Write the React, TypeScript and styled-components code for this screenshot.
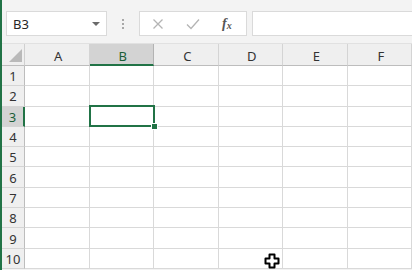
import React from 'react';
import styled, { createGlobalStyle } from 'styled-components';

const GlobalStyle = createGlobalStyle`
  html, body {
    margin: 0;
    padding: 0;
    background: #ffffff;
    overflow: hidden;
  }
  body {
    font-family: "Segoe UI", "Noto Sans", "Open Sans", sans-serif;
  }
`;

const columns = ['A', 'B', 'C', 'D', 'E', 'F'];
const rows = [1, 2, 3, 4, 5, 6, 7, 8, 9, 10];
const selCol = 'B';
const selRow = 3;

function App() {
    return (
        <Window>
            <GlobalStyle />
            <EdgeBar />
            <Main>
                <Toolbar>
                    <NameBox>
                        <span>B3</span>
                        <DropArrow />
                    </NameBox>
                    <Grip>
                        <i /><i /><i />
                    </Grip>
                    <FormulaButtons>
                        <ToolIcon>
                            <svg width="12" height="12" viewBox="0 0 12 12">
                                <path d="M1.5 1.5 L10.5 10.5 M10.5 1.5 L1.5 10.5" stroke="#b4b4b4" strokeWidth="1.3" fill="none" />
                            </svg>
                        </ToolIcon>
                        <ToolIcon>
                            <svg width="14" height="12" viewBox="0 0 14 12">
                                <path d="M1 6.5 L5 10.5 L13 1.5" stroke="#b4b4b4" strokeWidth="1.3" fill="none" />
                            </svg>
                        </ToolIcon>
                        <Fx>f<sub>x</sub></Fx>
                    </FormulaButtons>
                    <FormulaInput />
                </Toolbar>
                <Sheet>
                    <Corner>
                        <svg width="13" height="13" viewBox="0 0 13 13">
                            <path d="M13 0 L13 13 L0 13 Z" fill="#b9b9b9" />
                        </svg>
                    </Corner>
                    {columns.map(c => (
                        <ColHeader key={c} $active={c === selCol}>{c}</ColHeader>
                    ))}
                    {rows.map(r => (
                        <React.Fragment key={r}>
                            <RowHeader $active={r === selRow}>{r}</RowHeader>
                            {columns.map(c => (
                                <Cell key={c}>
                                    {c === selCol && r === selRow && (
                                        <Selection>
                                            <FillHandle />
                                        </Selection>
                                    )}
                                </Cell>
                            ))}
                        </React.Fragment>
                    ))}
                </Sheet>
                <Pointer>
                    <svg width="16" height="16" viewBox="0 0 16 16">
                        <path d="M5.5 1.5 H10.5 V5.5 H14.5 V10.5 H10.5 V14.5 H5.5 V10.5 H1.5 V5.5 H5.5 Z"
                              fill="#ffffff" stroke="#000000" strokeWidth="2" strokeLinejoin="round" />
                    </svg>
                </Pointer>
            </Main>
        </Window>
    );
}

const Window = styled.div`
  display: flex;
  flex-direction: row;
  width: 412px;
  height: 270px;
  overflow: hidden;
  background: #f3f3f3;
`

const EdgeBar = styled.div`
  width: 2px;
  flex: none;
  background: #217346;
`

const Main = styled.div`
  position: relative;
  flex: 1;
  display: flex;
  flex-direction: column;
  min-width: 0;
`

const Toolbar = styled.div`
  display: flex;
  flex-direction: row;
  align-items: center;
  height: 44px;
  box-sizing: border-box;
  padding: 4px 0 0 4px;
  border-bottom: 1px solid #e1e1e1;
`

const NameBox = styled.div`
  display: flex;
  align-items: center;
  justify-content: space-between;
  width: 101px;
  height: 25px;
  box-sizing: border-box;
  padding: 0 6px 0 6px;
  background: #ffffff;
  border: 1px solid #dadada;
  font-size: 13px;
  color: #262626;
`

const DropArrow = styled.div`
  width: 0;
  height: 0;
  border-left: 4px solid transparent;
  border-right: 4px solid transparent;
  border-top: 4px solid #6a6a6a;
  margin-top: 1px;
`

const Grip = styled.div`
  width: 32px;
  display: flex;
  flex-direction: column;
  align-items: center;
  gap: 2px;

  i {
    display: block;
    width: 2px;
    height: 2px;
    background: #a8a8a8;
  }
`

const FormulaButtons = styled.div`
  display: flex;
  align-items: center;
  width: 108px;
  height: 25px;
  box-sizing: border-box;
  background: #ffffff;
  border: 1px solid #dadada;
  padding-left: 12px;
`

const ToolIcon = styled.div`
  width: 34px;
  display: flex;
  align-items: center;
  svg {
    display: block;
  }
`

const Fx = styled.div`
  font-family: "Liberation Serif", serif;
  font-style: italic;
  font-weight: bold;
  font-size: 14px;
  color: #555555;
  margin-left: 2px;
  sub {
    font-size: 10px;
    vertical-align: baseline;
    position: relative;
    top: 1px;
  }
`

const FormulaInput = styled.div`
  flex: 1;
  height: 25px;
  margin-left: 5px;
  margin-right: -2px;
  box-sizing: border-box;
  background: #ffffff;
  border: 1px solid #dadada;
`

const Sheet = styled.div`
  display: grid;
  grid-template-columns: 23px repeat(6, 64.5px);
  grid-template-rows: 22px repeat(10, 20.3px);
  background: #ffffff;
  font-size: 13px;
`

const Corner = styled.div`
  background: #efefef;
  border-right: 1px solid #d0d0d0;
  border-bottom: 1px solid #bdbdbd;
  box-sizing: border-box;
  display: flex;
  align-items: flex-end;
  justify-content: flex-end;
  padding: 0 2px 3px 0;
`

const ColHeader = styled.div<{ $active: boolean }>`
  display: flex;
  align-items: center;
  justify-content: center;
  box-sizing: border-box;
  background: ${p => p.$active ? '#d3d3d3' : '#efefef'};
  color: ${p => p.$active ? '#1b5e38' : '#333333'};
  border-right: 1px solid ${p => p.$active ? '#b3b3b3' : '#d4d4d4'};
  border-bottom: ${p => p.$active ? '2px solid #217346' : '1px solid #bdbdbd'};
  padding: 3px 0 0 3px;
`

const RowHeader = styled.div<{ $active: boolean }>`
  display: flex;
  align-items: center;
  justify-content: center;
  box-sizing: border-box;
  background: ${p => p.$active ? '#d3d3d3' : '#efefef'};
  color: ${p => p.$active ? '#1b5e38' : '#333333'};
  border-right: ${p => p.$active ? '2px solid #217346' : '1px solid #bdbdbd'};
  border-bottom: 1px solid #d4d4d4;
  padding-top: 1px;
`

const Cell = styled.div`
  position: relative;
  box-sizing: border-box;
  border-right: 1px solid #d9d9d9;
  border-bottom: 1px solid #d9d9d9;
`

const Selection = styled.div`
  position: absolute;
  top: -2px;
  left: -1px;
  right: -2px;
  bottom: -1px;
  border: 2px solid #217346;
  z-index: 2;
`

const FillHandle = styled.div`
  position: absolute;
  right: -5px;
  bottom: -5px;
  width: 5px;
  height: 5px;
  background: #217346;
  border: 1px solid #ffffff;
`

const Pointer = styled.div`
  position: absolute;
  left: 262px;
  top: 253px;
  width: 16px;
  height: 16px;
  z-index: 3;
  svg {
    display: block;
  }
`

export default App;
